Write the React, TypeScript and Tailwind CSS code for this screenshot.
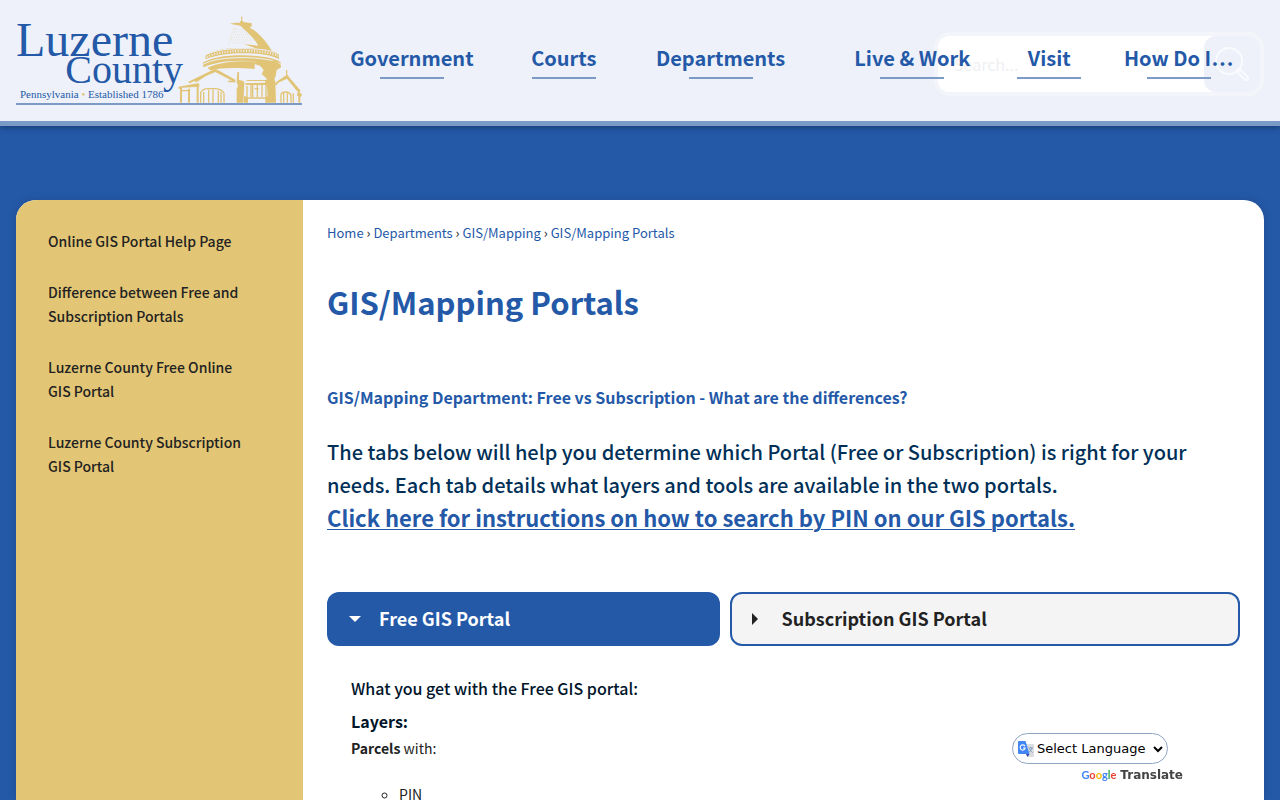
import React from 'react';

const navItems = ['Government', 'Courts', 'Departments', 'Live & Work', 'Visit', 'How Do I…'];

const sideLinks = [
  'Online GIS Portal Help Page',
  'Difference between Free and Subscription Portals',
  'Luzerne County Free Online GIS Portal',
  'Luzerne County Subscription GIS Portal',
];

const crumbs = ['Home', 'Departments', 'GIS/Mapping', 'GIS/Mapping Portals'];

function Logo() {
  return (
    <svg viewBox="16 14 286 92" className="block h-[92px] w-[286px] overflow-visible" role="img" aria-label="Luzerne County">
      <g fill="#2459a8" fontFamily="'Liberation Serif', serif">
        <text x="16" y="56" fontSize="48">Luzerne</text>
        <text x="183" y="83" fontSize="40" textAnchor="end">County</text>
        <text x="20" y="98" fontSize="11">
          Pennsylvania <tspan fill="#e0c577">•</tspan> Established 1786
        </text>
      </g>
      <g transform="translate(170 10) scale(0.3333)" fill="#e1c476" stroke="none">
        <path d="M213 20h4v8h-4z" />
        <path d="M198 38h12l4-10 7 8 24 4v9l-6 4c18 8 36 26 48 42 10 14 16 20 18 28l-4 2c-32-2-50-14-80-22 16 2 30 2 44 4-12-22-30-38-46-52l-8-8-32-6z" />
        <g fill="none" stroke="#e1c476" strokeWidth="2" strokeDasharray="2 4" opacity="0.6">
          <path d="M188 58h32M186 66h54M184 74h62M182 82h70M184 90h62M188 98h40M176 108l8-34 14-24" />
        </g>
        <path d="M106 138c12-14 50-24 112-24 56 0 94 6 108 18l1 16c-26-14-60-18-110-18-50 0-88 8-110 18z" />
        <path d="M110 133c30-13 60-17 108-17 46 0 82 4 106 15" fill="none" stroke="#eef1f9" strokeWidth="3" />
        <path d="M110 141c32-13 62-18 108-18 46 0 82 4 106 15" fill="none" stroke="#eef1f9" strokeWidth="6" strokeDasharray="3 5" />
        <path d="M98 158c24-14 66-22 118-22 54 0 96 8 116 20l1 18c-24-14-60-22-114-22-52-1-94 8-119 20z" />
        <path d="M99 163c26-14 66-20 118-20 54 0 92 6 116 20" fill="none" stroke="#eef1f9" strokeWidth="3" />
        <path d="M112 174c34-18 86-22 142-20v23c-56-4-100-4-132 4z" />
        <path d="M254 152h62l14 10v12l-10 6-3 18-8 18-14-6-20-18 6-12-10-12-17-6z" />
        <path d="M134 168h5v12l-5 2z" />
        <path d="M54 216l78-38 10 1 54 30v8h-20l-4-5 14 0-50-26-28 12-28 18-8-3-12 7z" />
        <path d="M26 230l58-10 4 3v7l-52 3v45h-6v-42h-4zM54 236h6v42h-6zM80 226h6v52h-6z" />
        <path fill="none" stroke="#e1c476" strokeWidth="4" d="M92 278v-30q6-12 22-12h22q20 2 26 14v28M101 278v-32M116 278v-39M129 278v-39M145 278v-36M153 278v-32M36 242h20" />
        <path d="M202 186h5v24l14 3 2 8-3 57h-20v-40l4-10-4-12z" />
        <path d="M224 220l66-2v7h-62zM232 210h58v3h-62z" />
        <path fill="none" stroke="#e1c476" strokeWidth="4" d="M231 228v36M243 224v38M248 224v38M262 222v40M276 222v38M288 222v42M254 236h12" />
        <path d="M222 258l12 4h50l12-4v20h-10v-12h-52v12h-12z" />
        <path d="M292 204h20l4 12 2 62h-24l-3-48-6-14z" />
        <path d="M316 218l32-22v-16h4v14l10 13 29 34-2 9-10-9-28-35-26 12-8 10z" />
        <path d="M383 246l12 5v7l-4 3v17h-6v-20h-4z" />
        <path fill="none" stroke="#e1c476" strokeWidth="4" d="M333 278v-26q4-6 14-6 12 0 16 10v22M341 278v-28M352 278v-28M370 250v28" />
      </g>
      <rect x="16" y="103" width="286" height="2" fill="#7b9bc6" />
    </svg>
  );
}

function TranslateIcon() {
  return (
    <svg viewBox="0 0 16 16" className="h-4 w-4 shrink-0" aria-hidden="true">
      <path d="M6 3h9a1 1 0 0 1 1 1v11a1 1 0 0 1-1 1H9z" fill="#dadce0" />
      <path d="M1 0h6.500l4 13H1a1 1 0 0 1-1-1V1a1 1 0 0 1 1-1z" fill="#4285f4" />
      <path d="M8 13h3.500L9.500 16z" fill="#3247a8" />
      <path d="M7 5.200A2.600 2.600 0 1 0 7.300 7H5" fill="none" stroke="#fff" strokeWidth="1.1" />
      <path d="M10.500 7h4.500M12.700 6v1M14 7q-.6 2.500-3 4M11.500 8q1 2.300 3 3.500" fill="none" stroke="#7c9bb5" strokeWidth="0.9" />
    </svg>
  );
}

export default function App() {
  return (
    <div className="flex h-screen flex-col overflow-hidden bg-[#2459a8] font-['Noto_Sans_CJK_SC',sans-serif] text-sm text-[#222]">
      <header className="relative flex shrink-0 items-start border-b-[5px] border-[#7b9bc6] bg-[#eef1f9] px-4 pt-[14px] pb-[15px] shadow-[0_2px_6px_rgba(0,0,0,0.3)]">
        <a href="#home" className="shrink-0">
          <Logo />
        </a>
        <form className="absolute top-8 right-4 flex h-16 w-[330px] items-stretch rounded-2xl border-4 border-[#f3f5fb] bg-white">
          <input
            type="text"
            aria-label="Search"
            placeholder="Search..."
            className="min-w-0 flex-1 rounded-xl bg-white pl-4 text-base outline-none placeholder:text-[#eef0f3]"
          />
          <button type="button" aria-label="Search" className="flex w-14 items-center justify-center rounded-xl bg-[#eef1f9]">
            <svg viewBox="0 0 36 36" className="h-9 w-9" fill="none" aria-hidden="true">
              <circle cx="15" cy="15" r="13" stroke="#fafbfe" strokeWidth="2" />
              <path d="M25 25l7 7" stroke="#fafbfe" strokeWidth="6" strokeLinecap="round" />
              <path d="M26 26l6 6" stroke="#eef1f9" strokeWidth="2" strokeLinecap="round" />
            </svg>
          </button>
        </form>
        <nav className="relative ml-4 grid flex-1 grid-cols-[188fr_116fr_198fr_186fr_88fr_171fr] pt-7">
          {navItems.map((item) => (
            <a
              key={item}
              href="#nav"
              className="flex flex-col items-center gap-[3px] text-xl leading-8 font-bold whitespace-nowrap text-[#2459a8]"
            >
              {item}
              <span className="block h-[2px] w-16 bg-[#7b9bc6]" />
            </a>
          ))}
        </nav>
      </header>

      <div className="mx-4 mt-[74px] flex min-h-0 flex-1 overflow-hidden rounded-t-[20px] bg-white shadow-[0_0_8px_rgba(0,0,0,0.15)]">
        <aside className="w-[23%] shrink-0 bg-[#e2c675] pt-[29px] pr-14 pl-8">
          <ul className="flex flex-col gap-[27px]">
            {sideLinks.map((link) => (
              <li key={link}>
                <a href="#side" className="block text-sm leading-6 font-medium">
                  {link}
                </a>
              </li>
            ))}
          </ul>
        </aside>

        <main className="min-w-0 flex-1 px-6 pt-[23px]">
          <nav aria-label="Breadcrumb" className="text-[13px] leading-5">
            {crumbs.map((crumb, i) => (
              <React.Fragment key={crumb}>
                {i > 0 && ' › '}
                <a href="#crumb" className="text-[#2459a8]">
                  {crumb}
                </a>
              </React.Fragment>
            ))}
          </nav>
          <h1 className="mt-[35px] text-[31px] leading-12 font-bold text-[#2459a8]">GIS/Mapping Portals</h1>
          <h2 className="mt-[59px] text-base leading-6 font-bold text-[#2459a8]">
            GIS/Mapping Department: Free vs Subscription - What are the differences?
          </h2>
          <p className="mt-[26px] text-xl leading-[33px] font-medium text-[#003057]">
            The tabs below will help you determine which Portal (Free or Subscription) is right for your needs. Each tab
            details what layers and tools are available in the two portals.
          </p>
          <a href="#pin" className="block text-[22px] leading-[33px] font-bold text-[#2459a8] underline decoration-1 underline-offset-2">
            Click here for instructions on how to search by PIN on our GIS portals.
          </a>

          <div role="tablist" className="mt-[58px] flex gap-[10px]">
            <button
              type="button"
              role="tab"
              aria-selected="true"
              className="flex h-[54px] w-[43%] items-center gap-[18px] rounded-xl bg-[#2459a8] px-[22px] pb-[2px] text-lg font-bold text-white"
            >
              <svg viewBox="0 0 12 12" className="h-3 w-3" fill="currentColor" aria-hidden="true">
                <path d="M0 4h12l-6 6z" />
              </svg>
              Free GIS Portal
            </button>
            <button
              type="button"
              role="tab"
              aria-selected="false"
              className="flex h-[54px] flex-1 items-center gap-[18px] rounded-xl border-2 border-[#2459a8] bg-[#f4f4f4] px-5 pb-[2px] text-lg font-bold"
            >
              <svg viewBox="0 0 12 12" className="h-3 w-3 overflow-visible" fill="currentColor" aria-hidden="true">
                <path d="M0 1v12l6-6z" />
              </svg>
              Subscription GIS Portal
            </button>
          </div>

          <section role="tabpanel" className="px-6 pt-[29px]">
            <h3 className="text-base leading-[27px] font-medium text-[#00142a]">What you get with the Free GIS portal:</h3>
            <h4 className="mt-[6px] text-base leading-[27px] font-bold text-[#00142a]">Layers:</h4>
            <p className="mt-px text-sm leading-6">
              <strong>Parcels</strong> with:
            </p>
            <ul className="mt-[22px] list-[circle] pl-12">
              <li className="text-sm leading-6">PIN</li>
            </ul>
          </section>
        </main>
      </div>

      <div className="fixed right-[97px] bottom-4 flex flex-col items-end font-['DejaVu_Sans',sans-serif]">
        <label className="mr-[15px] flex h-[31px] w-[156px] items-center rounded-full border border-[#8fa5c4] bg-white pr-px pl-[5px]">
          <TranslateIcon />
          <select aria-label="Select Language" className="-ml-px h-7 min-w-0 flex-1 bg-transparent text-[13px] text-black outline-none">
            <option>Select Language</option>
          </select>
        </label>
        <div className="mt-px flex items-center gap-1 leading-[19px] font-bold text-[#444]">
          <span className="font-['Lato',sans-serif] text-[11px] font-bold">
            <span className="text-[#4285f4]">G</span>
            <span className="text-[#ea4335]">o</span>
            <span className="text-[#fbbc05]">o</span>
            <span className="text-[#4285f4]">g</span>
            <span className="text-[#34a853]">l</span>
            <span className="text-[#ea4335]">e</span>
          </span>
          <span className="text-xs">Translate</span>
        </div>
      </div>
    </div>
  );
}
